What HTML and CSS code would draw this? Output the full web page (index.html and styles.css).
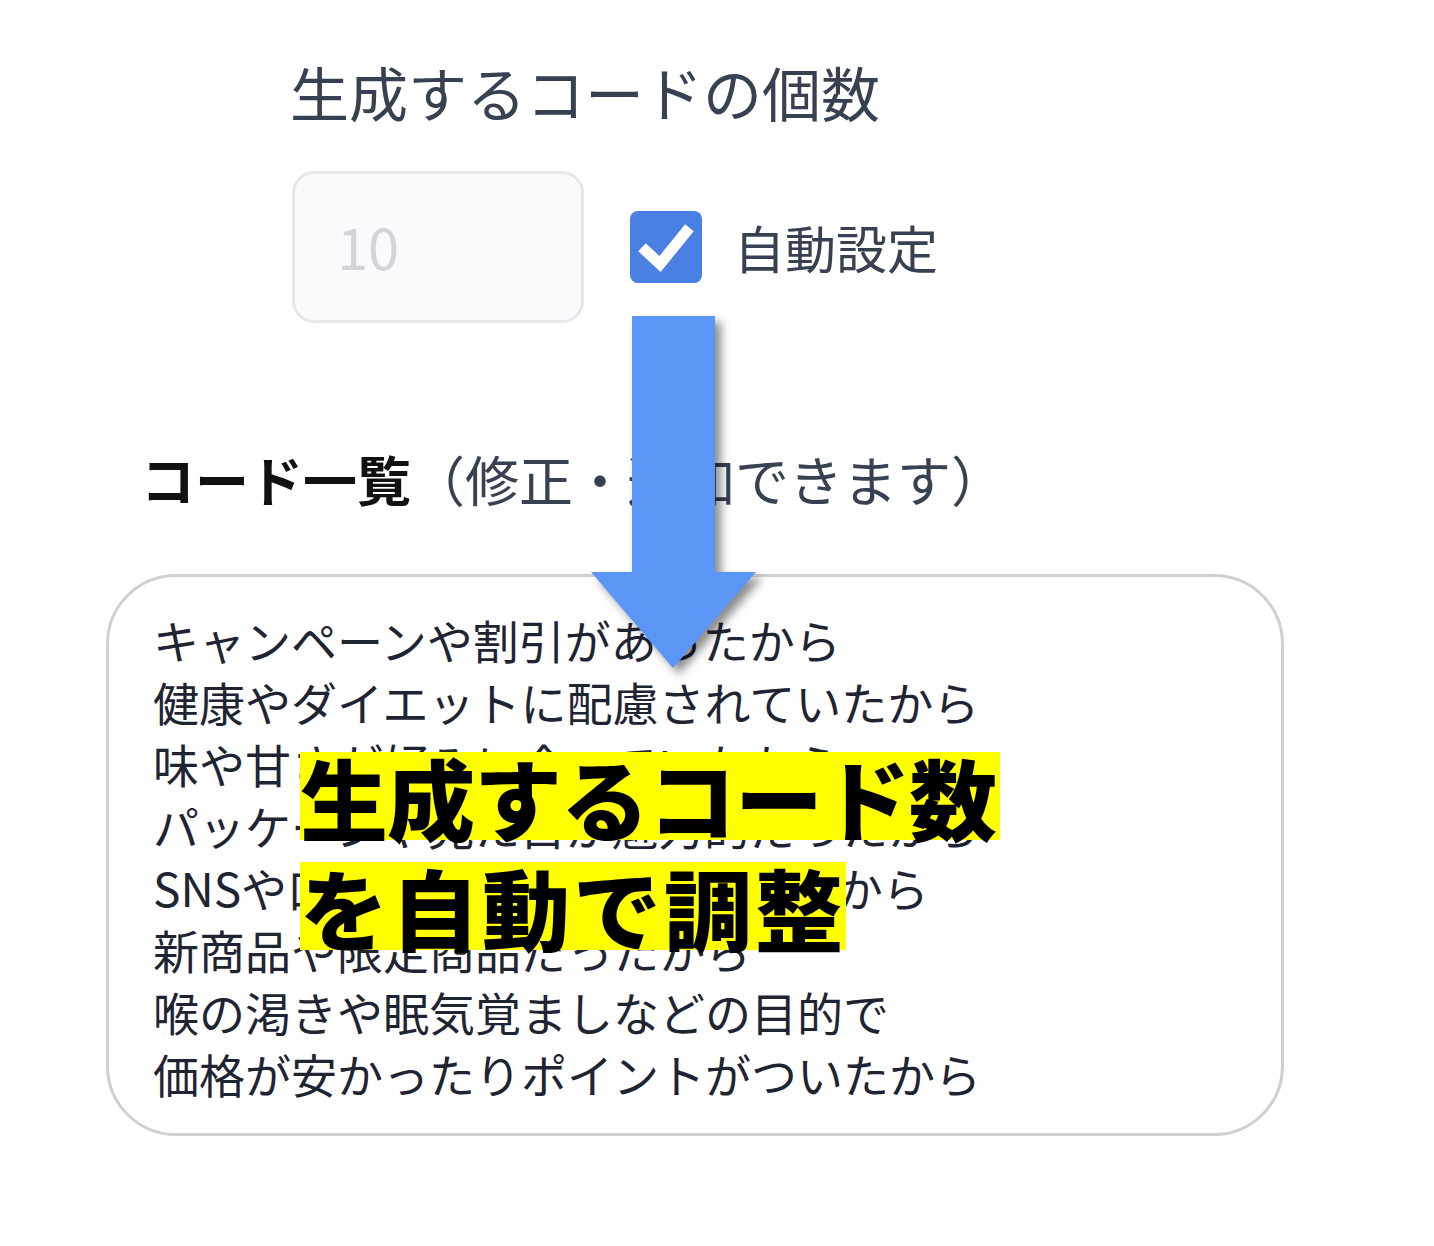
FILE: index.html
```html
<!DOCTYPE html>
<html lang="ja">
<head>
    <meta charset="UTF-8">
    <meta name="viewport" content="width=device-width, initial-scale=1.0">
    <title>コード生成</title>
    <link rel="stylesheet" href="styles.css">
</head>
<body>
    <div class="page">
        <div class="count-block">
            <div class="count-label">生成するコードの個数</div>
            <div class="count-row">
                <div class="count-input">10</div>
                <label class="auto">
                    <span class="check">
                        <svg width="72" height="72" viewBox="0 0 72 72">
                            <path d="M16 40 L30 53 L56 21" fill="none" stroke="#fff" stroke-width="11" stroke-linecap="square"/>
                        </svg>
                    </span>
                    <span class="auto-text">自動設定</span>
                </label>
            </div>
        </div>

        <div class="list-title"><b>コード一覧</b>（修正・追加できます）</div>

        <div class="code-list">
            キャンペーンや割引があったから<br>
            健康やダイエットに配慮されていたから<br>
            味や甘さが好みに合っていたから<br>
            パッケージや見た目が魅力的だったから<br>
            SNSや口コミで話題になっていたから<br>
            新商品や限定商品だったから<br>
            喉の渇きや眠気覚ましなどの目的で<br>
            価格が安かったりポイントがついたから
        </div>

        <!-- 注釈 -->
        <svg class="arrow" width="190" height="380" viewBox="0 0 190 380">
            <path d="M46 6 H129 V262 H170 L87 358 L5 262 H46 Z" fill="#5b96f6"/>
        </svg>
        <div class="note">
            <span>生成するコード数</span>
            <span class="wide">を自動で調整</span>
        </div>
    </div>
</body>
</html>
```

FILE: styles.css
```css
body {
    margin: 0;
    background: #fff;
    font-family: "Noto Sans CJK JP", "Noto Sans", sans-serif;
}
.page {
    position: relative;
    width: 1434px;
    height: 1246px;
    padding-top: 57px;
    box-sizing: border-box;
}
.count-block {
    padding-left: 292px;
}
.count-label {
    font-size: 59px;
    line-height: 70px;
    color: #374151;
    margin-left: -2px;
}
.count-row {
    display: flex;
    align-items: center;
    margin-top: 44px;
}
.count-input {
    width: 292px;
    height: 152px;
    box-sizing: border-box;
    border: 3px solid #e5e7eb;
    border-radius: 22px;
    background: #f9fafb;
    color: #d1d5db;
    font-size: 56px;
    line-height: 144px;
    padding-left: 42px;
}
.auto {
    display: flex;
    align-items: center;
    margin-left: 46px;
}
.check {
    width: 72px;
    height: 72px;
    border-radius: 8px;
    background: #4a7fe3;
    display: block;
}
.check svg {
    display: block;
}
.auto-text {
    margin-left: 32px;
    font-size: 51px;
    color: #374151;
}
.list-title {
    margin-top: 124px;
    padding-left: 141px;
    font-size: 54px;
    line-height: 64px;
    color: #374151;
}
.list-title b {
    color: #111;
    font-weight: 700;
}
.code-list {
    margin: 63px 0 0 106px;
    width: 1178px;
    height: 562px;
    box-sizing: border-box;
    border: 3px solid #d0d0d0;
    border-radius: 70px;
    padding: 31px 0 0 44px;
    font-size: 46px;
    line-height: 62px;
    color: #1f2433;
}
.arrow {
    position: absolute;
    left: 586px;
    top: 310px;
    filter: drop-shadow(6px 6px 5px rgba(0, 0, 0, 0.45));
}
.note {
    position: absolute;
    left: 300px;
    top: 752px;
    display: flex;
    flex-direction: column;
    gap: 22px;
    align-items: flex-start;
}
.note span {
    background: #ffff00;
    color: #000;
    font-size: 88px;
    font-weight: 900;
    line-height: 88px;
    letter-spacing: -1px;
    padding-right: 4px;
}
.note .wide {
    letter-spacing: 3px;
    padding-right: 0;
}
```
